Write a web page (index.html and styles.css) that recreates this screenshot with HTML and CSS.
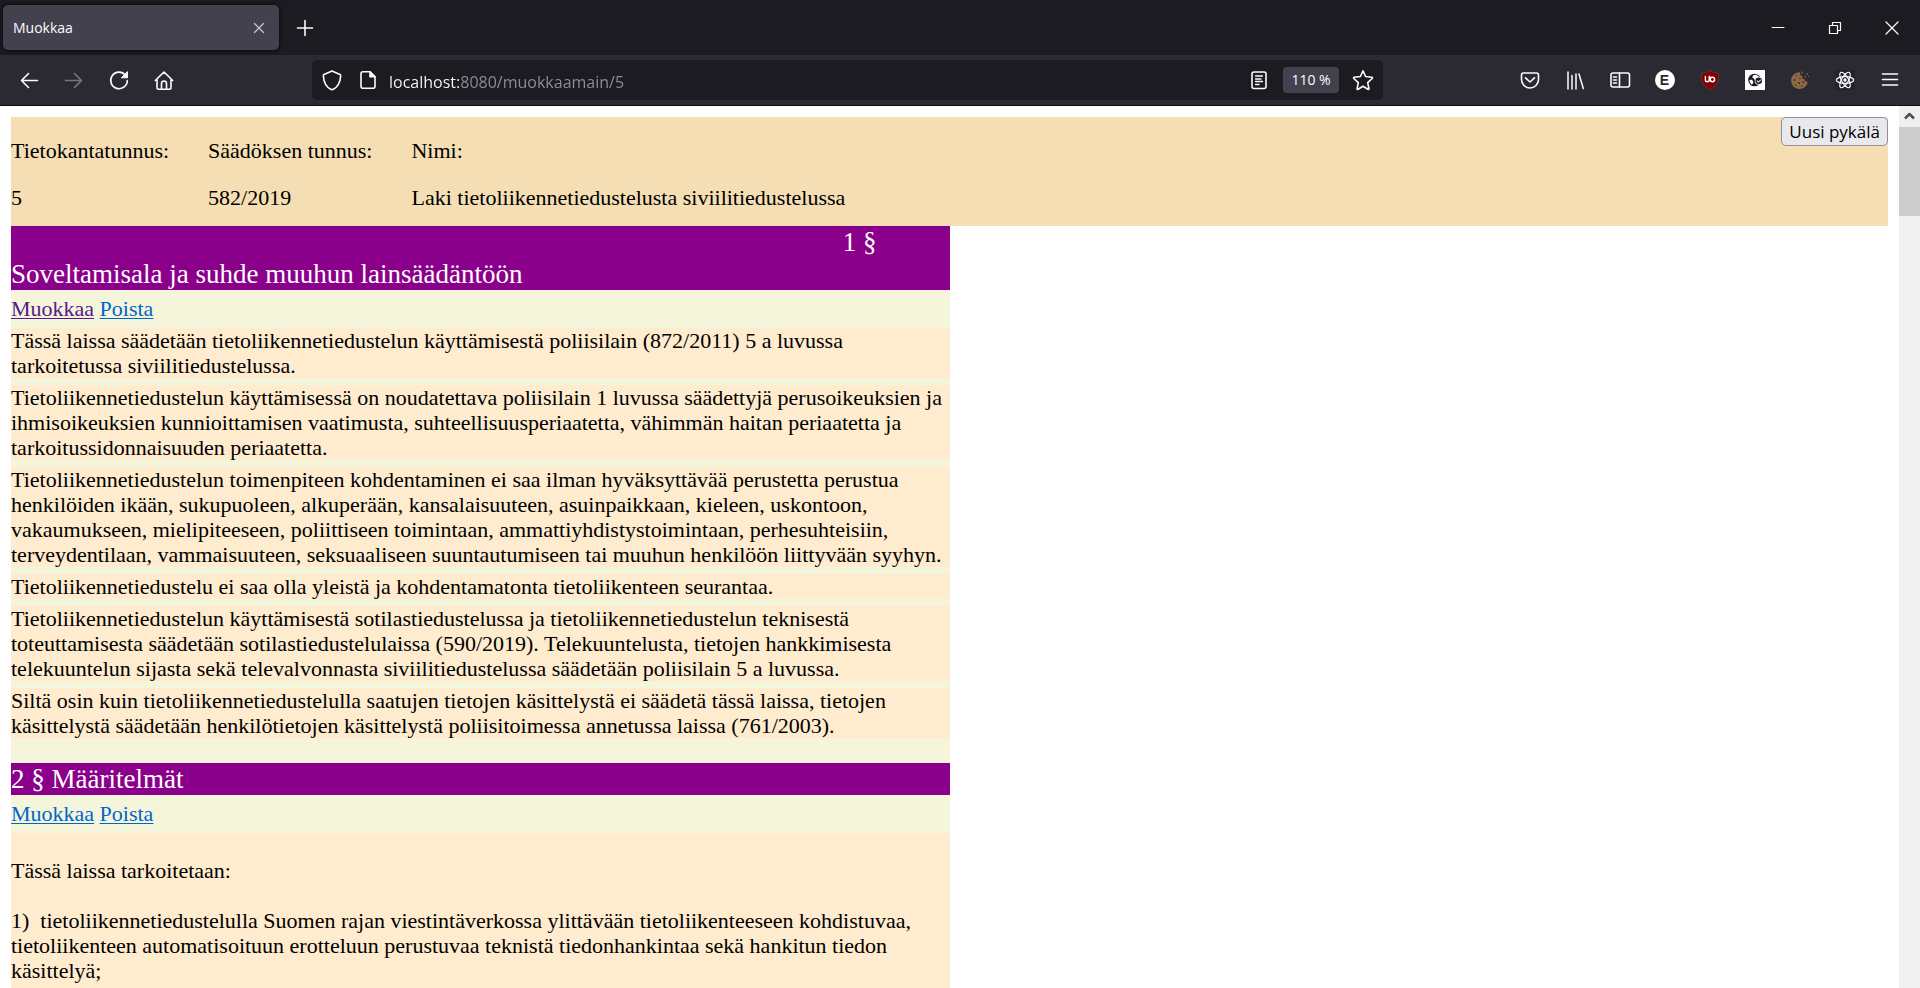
FILE: index.html
```html
<!DOCTYPE html>
<html lang="fi">
<head>
<meta charset="utf-8">
<title>Muokkaa</title>
<link rel="stylesheet" href="styles.css">
</head>
<body>
<div class="tabs">
  <div class="tab">
    <span class="tab-title">Muokkaa</span>
    <button class="tab-close" aria-label="Sulje välilehti"><svg width="24" height="24" viewBox="0 0 24 24"><path d="M7.500 7.500l9 9m0-9l-9 9" stroke-width="1.300"/></svg></button>
  </div>
  <button class="icon new-tab" aria-label="Uusi välilehti"><svg width="24" height="24" viewBox="0 0 24 24"><path d="M12 4.500v15M4.500 12h15"/></svg></button>
  <div class="window-buttons">
    <button aria-label="Pienennä"><svg width="24" height="24" viewBox="0 0 24 24"><path d="M6 11.500h12" stroke-width="1"/></svg></button>
    <button aria-label="Palauta"><svg width="24" height="24" viewBox="0 0 24 24"><path d="M6.500 9.500h8v8h-8zM9.500 9.500v-3h8v8h-3" stroke-width="1.200" stroke-linecap="butt"/></svg></button>
    <button aria-label="Sulje"><svg width="24" height="24" viewBox="0 0 24 24"><path d="M6 6l12 12m0-12L6 18" stroke-width="1.200"/></svg></button>
  </div>
</div>
<div class="toolbar">
  <div class="nav">
    <button class="icon" aria-label="Takaisin"><svg width="24" height="24" viewBox="0 0 24 24"><path d="M20.500 12.500h-16M11.500 5.500l-7 7 7 7"/></svg></button>
    <button class="icon dim" aria-label="Eteenpäin" disabled><svg width="24" height="24" viewBox="0 0 24 24"><path d="M3.500 12.500h16M12.500 5.500l7 7-7 7"/></svg></button>
    <button class="icon" aria-label="Päivitä"><svg width="24" height="24" viewBox="0 0 24 24"><path d="M18.500 7.300A8.300 8.300 0 1 0 20.300 12.500"/><path d="M20.500 4v5.800h-5.800z" fill="currentColor" stroke-width="1"/></svg></button>
    <button class="icon" aria-label="Koti"><svg width="24" height="24" viewBox="0 0 24 24"><path d="M3.300 12.500L12 4l8.700 8.500M5 11.200V19.500c0 1 .7 1.700 1.700 1.700h10.600c1 0 1.700-.7 1.700-1.700V11.200M9.500 21v-5.500a2.500 2.500 0 0 1 5 0V21"/></svg></button>
  </div>
  <div class="urlbar">
    <svg width="24" height="24" viewBox="0 0 24 24"><path d="M12 3l8 3.400c.6.300.8.800.7 1.400-.4 6-3 11.200-7.400 13.500-.9.500-1.700.5-2.600 0C6.300 19 3.700 13.800 3.300 7.800c-.1-.6.100-1.100.7-1.400z"/></svg>
    <svg width="24" height="24" viewBox="0 0 24 24"><path d="M14 3.800H7C5.700 3.800 5 4.700 5 5.800v12.400c0 1.200.8 2 2 2h10c1.200 0 2-.8 2-2V8.800z"/><path d="M14 3.800v5h5z" fill="currentColor"/></svg>
    <input class="url" type="text" aria-label="Osoite" value="localhost:8080/muokkaamain/5">
    <svg width="24" height="24" viewBox="0 0 24 24"><rect x="5" y="4" width="14" height="16.500" rx="2"/><path d="M8.500 8h7M8.500 11h5.500M8.500 13.500h7M8.500 16.500h3.500" stroke-width="1.300"/></svg>
    <button class="zoom">110 %</button>
    <svg width="24" height="24" viewBox="0 0 24 24"><path d="M12 2.800l2.600 5.700 6.200.8c.7.100.9.700.4 1.200l-4.500 4.200 1.200 5.900c.1.700-.4 1-1 .7L12 18.200l-4.900 3.100c-.6.300-1.100 0-1-.7l1.200-5.900-4.500-4.200c-.5-.5-.3-1.100.4-1.200l6.200-.8z"/></svg>
  </div>
  <div class="extensions">
    <button class="icon" aria-label="Pocket"><svg width="24" height="24" viewBox="0 0 24 24"><path d="M5.500 5h13c1.200 0 2 .8 2 2v4.500a8.500 8.500 0 0 1-17 0V7c0-1.200.8-2 2-2zM7.500 9.800l4.500 4.200 4.500-4.200"/></svg></button>
    <button class="icon" aria-label="Kirjasto"><svg width="24" height="24" viewBox="0 0 24 24"><path d="M5 4v17M9 7.500V21M13 6v15M16 6l4.300 14.500" stroke-width="1.500"/></svg></button>
    <button class="icon" aria-label="Sivupaneeli"><svg width="24" height="24" viewBox="0 0 24 24"><rect x="3" y="5" width="18.500" height="14" rx="2"/><path d="M11.500 5v14M5.500 9h3M5.500 12h3M5.500 15h3"/></svg></button>
    <button class="icon" aria-label="Laajennus E"><span class="disc">E</span></button>
    <button class="icon" aria-label="uBlock Origin"><svg width="24" height="24" viewBox="0 0 24 24"><path d="M12 2.500c3 2 6 2.600 8.800 2.900 0 8-1.300 12.600-8.800 16.300C4.500 18 3.200 13.400 3.200 5.400 6 5.100 9 4.500 12 2.500z" fill="#800000" stroke="#6b4046" stroke-width=".7"/><path d="M7.400 8.500v3.300a1.900 1.900 0 0 0 3.800 0V8.500M11.700 8.500v3.500" stroke-width="1.400"/><circle cx="14.400" cy="11.500" r="2.200" stroke-width="1.500"/></svg></button>
    <button class="icon" aria-label="Verkkolaajennus"><svg class="solid" width="24" height="24" viewBox="0 0 24 24"><path d="M2 2h20v20H2z" fill="#fff"/><circle cx="11.500" cy="12" r="6.300" fill="#1c1b22"/><path d="M6.500 12.200l1.800-.6 1.700 1.400.3 2-1.500 1.500c-1.300-.8-2.200-2.300-2.300-4.300zM10.500 7l2.700-.2 2.800 1.800-2 .8-1 1.800-1.600.5-.9-1.600-1.500-.6z" fill="#fff"/><circle cx="15.700" cy="12.700" r="4" fill="#fff"/><circle cx="15.700" cy="12.700" r="3.300" fill="#1c1b22"/><path d="M14.100 12.300l1.300 1.300 2.300-2.300.6.600-2.900 2.900-1.900-1.900z" fill="#fff"/></svg></button>
    <button class="icon" aria-label="Evästeet"><svg class="solid" width="24" height="24" viewBox="0 0 24 24"><path d="M12 4.200a8.400 8.400 0 1 0 7.800 9.500c-2 .3-3-.8-2.800-2.500-2 .2-3.300-1-2.700-3-1.700-.3-2.600-2-2.300-4z" fill="#8d6846"/><path d="M13.300 3.500h1.200v2h-1.200zM18 5.500h2v1h-2zM16.500 8h1.200v1.200h-1.200zM20 8h1v1h-1z" fill="#8d6846"/><g fill="#3b2921"><circle cx="8.500" cy="8" r=".8"/><circle cx="12" cy="10.500" r=".8"/><circle cx="6.500" cy="12" r=".9"/><circle cx="11" cy="15" r="1"/><circle cx="15.500" cy="14" r=".9"/><circle cx="8" cy="17" r=".8"/><circle cx="14" cy="18" r=".8"/></g></svg></button>
    <button class="icon" aria-label="React"><svg width="24" height="24" viewBox="0 0 24 24"><path class="solid" d="M2 2h20v20H2z" fill="#24232b"/><g stroke-width="1.200"><ellipse cx="12" cy="12" rx="8.700" ry="3.400"/><ellipse cx="12" cy="12" rx="8.700" ry="3.400" transform="rotate(60 12 12)"/><ellipse cx="12" cy="12" rx="8.700" ry="3.400" transform="rotate(120 12 12)"/></g><circle class="solid" cx="12" cy="12" r="1.700" fill="currentColor"/></svg></button>
    <button class="icon" aria-label="Valikko"><svg width="24" height="24" viewBox="0 0 24 24"><path d="M4.500 6h15M4.500 11.500h15M4.500 17h15"/></svg></button>
  </div>
</div>
<div class="viewport">
  <main class="page">
    <header class="law">
      <dl class="fields">
        <div><dt>Tietokantatunnus:</dt><dd>5</dd></div>
        <div><dt>Säädöksen tunnus:</dt><dd>582/2019</dd></div>
        <div><dt>Nimi:</dt><dd>Laki tietoliikennetiedustelusta siviilitiedustelussa</dd></div>
      </dl>
      <button class="add">Uusi pykälä</button>
    </header>
    <div class="sections">
      <section>
        <h2><span class="number">1 §</span>Soveltamisala ja suhde muuhun lainsäädäntöön</h2>
        <div class="actions"><a class="visited" href="#muokkaa-1">Muokkaa</a> <a href="#poista-1">Poista</a></div>
        <div class="moments">
          <p>Tässä laissa säädetään tietoliikennetiedustelun käyttämisestä poliisilain (872/2011) 5 a luvussa tarkoitetussa siviilitiedustelussa.</p>
          <p>Tietoliikennetiedustelun käyttämisessä on noudatettava poliisilain 1 luvussa säädettyjä perusoikeuksien ja ihmisoikeuksien kunnioittamisen vaatimusta, suhteellisuusperiaatetta, vähimmän haitan periaatetta ja tarkoitussidonnaisuuden periaatetta.</p>
          <p>Tietoliikennetiedustelun toimenpiteen kohdentaminen ei saa ilman hyväksyttävää perustetta perustua henkilöiden ikään, sukupuoleen, alkuperään, kansalaisuuteen, asuinpaikkaan, kieleen, uskontoon, vakaumukseen, mielipiteeseen, poliittiseen toimintaan, ammattiyhdistystoimintaan, perhesuhteisiin, terveydentilaan, vammaisuuteen, seksuaaliseen suuntautumiseen tai muuhun henkilöön liittyvään syyhyn.</p>
          <p>Tietoliikennetiedustelu ei saa olla yleistä ja kohdentamatonta tietoliikenteen seurantaa.</p>
          <p>Tietoliikennetiedustelun käyttämisestä sotilastiedustelussa ja tietoliikennetiedustelun teknisestä toteuttamisesta säädetään sotilastiedustelulaissa (590/2019). Telekuuntelusta, tietojen hankkimisesta telekuuntelun sijasta sekä televalvonnasta siviilitiedustelussa säädetään poliisilain 5 a luvussa.</p>
          <p>Siltä osin kuin tietoliikennetiedustelulla saatujen tietojen käsittelystä ei säädetä tässä laissa, tietojen käsittelystä säädetään henkilötietojen käsittelystä poliisitoimessa annetussa laissa (761/2003).</p>
        </div>
      </section>
      <section>
        <h2>2 § Määritelmät</h2>
        <div class="actions"><a href="#muokkaa-2">Muokkaa</a> <a href="#poista-2">Poista</a></div>
        <div class="moments">
          <div class="list">
            <p>Tässä laissa tarkoitetaan:</p>
            <p>1)&nbsp; tietoliikennetiedustelulla Suomen rajan viestintäverkossa ylittävään tietoliikenteeseen kohdistuvaa, tietoliikenteen automatisoituun erotteluun perustuvaa teknistä tiedonhankintaa sekä hankitun tiedon käsittelyä;</p>
          </div>
        </div>
      </section>
    </div>
  </main>
  <div class="scrollbar" aria-hidden="true">
    <svg width="21" height="21" viewBox="0 0 21 21"><path d="M6 12.500l4.500-4.500 4.500 4.500" stroke="#505050" stroke-width="2.500" stroke-linecap="butt"/></svg>
    <div class="thumb"></div>
  </div>
</div>
</body>
</html>
```
FILE: styles.css
```css
* { box-sizing: border-box; }
body {
  margin: 0;
  height: 100vh;
  display: flex;
  flex-direction: column;
  overflow: hidden;
  background: #fff;
  color: #000;
  font: 22px/25px "Liberation Serif", serif;
}
svg { display: block; flex: none; fill: none; stroke: currentColor; stroke-width: 1.6; stroke-linecap: round; stroke-linejoin: round; }
.solid { stroke: none; }
button { padding: 0; border: 0; background: none; color: inherit; font: inherit; }

.tabs, .toolbar {
  flex: none;
  display: flex;
  align-items: center;
  color: #fbfbfe;
  font: 14px/20px "Open Sans", "Noto Sans", sans-serif;
}
.tabs { height: 55px; padding: 0 0 0 3px; background: #1c1b22; }
.tab {
  display: flex;
  align-items: center;
  justify-content: space-between;
  width: 276px;
  height: 45px;
  padding: 0 8px 0 10px;
  border-radius: 5px;
  background: #42414d;
  box-shadow: 0 0 4px #000;
}
.tab-close { color: #c5c5ca; }
.icon { display: grid; place-items: center; width: 45px; height: 40px; }
.new-tab { margin-left: 3px; }
.window-buttons { display: flex; margin-left: auto; }
.window-buttons button { display: grid; place-items: center; width: 57px; height: 40px; }

.toolbar { height: 51px; padding: 0 8px 0 6px; background: #2b2a33; border-bottom: 1px solid #0c0c0d; }
.nav, .extensions { display: flex; flex: none; }
.dim { color: #77767d; }
.urlbar {
  flex: 1;
  display: flex;
  align-items: center;
  gap: 12px;
  height: 40px;
  margin: 0 124px 0 126px;
  padding: 0 8px;
  border-radius: 5px;
  background: #1c1b22;
}
.url {
  flex: 1;
  min-width: 0;
  padding: 3px 0 0;
  margin-left: -3px;
  border: 0;
  outline: 0;
  font: 16px/24px "Open Sans", "Noto Sans", sans-serif;
  color: transparent;
  background: linear-gradient(to right, #fbfbfe 70px, #8f8f98 70px);
  -webkit-background-clip: text;
  background-clip: text;
}
.zoom { width: 56px; height: 26px; border-radius: 4px; background: #42414d; font-size: 14px; }
.disc {
  width: 20px;
  border-radius: 50%;
  background: #fff;
  color: #2b2a33;
  font: bold 14px/20px "Liberation Sans", sans-serif;
  text-align: center;
}

.viewport { flex: 1; min-height: 0; display: flex; }
.page { flex: 1; min-width: 0; padding: 11px; overflow: hidden; }
.law { display: flex; justify-content: space-between; align-items: flex-start; background: #f5deb3; }
.fields { display: flex; gap: 39px; margin: 0; padding: 21px 0 16px; }
.fields div { display: grid; gap: 22px; }
.fields dd { margin: 0; }
.add {
  height: 29px;
  padding: 0 7px;
  border: 1px solid #8f8f9d;
  border-radius: 5px;
  background: #e9e9ed;
  font: 17px/25px "Open Sans", "Noto Sans", sans-serif;
}
.sections { width: 50%; background: #f5f5dc; }
.sections h2 { margin: 0; background: #8b008b; color: #fff; font-size: 27px; font-weight: 400; line-height: 32px; }
.number { display: block; padding-right: 73px; text-align: right; }
.actions { padding: 6px 0 7px; }
.actions a { color: #0066cc; text-decoration-thickness: 1px; text-underline-offset: 2px; }
.actions .visited { color: #551a8b; }
.moments { display: grid; gap: 7px; padding-bottom: 25px; }
.moments p { margin: 0; background: #ffebcd; }
.list { display: grid; gap: 25px; padding: 25px 0; background: #ffebcd; }

.scrollbar { flex: none; width: 21px; background: #f0f0f0; }
.thumb { height: 89px; background: #cdcdcd; }
```
